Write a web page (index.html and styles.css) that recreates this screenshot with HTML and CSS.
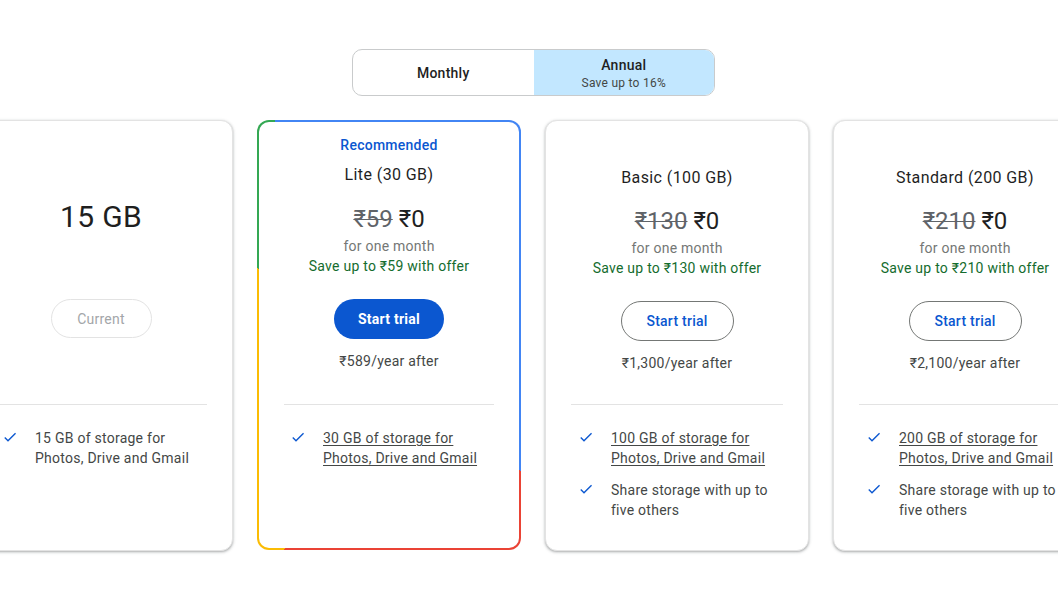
FILE: index.html
```html
<!DOCTYPE html>
<html lang="en">
<head>
<meta charset="utf-8">
<title>Storage plans</title>
<link rel="stylesheet" href="styles.css">
</head>
<body>
<main class="page">
  <div class="toggle">
    <div class="opt">
      <span class="opt-label">Monthly</span>
    </div>
    <div class="opt active">
      <span class="opt-label">Annual</span>
      <span class="opt-sub">Save up to 16%</span>
    </div>
  </div>

  <div class="cards">
    <section class="card">
      <div class="top top-free">
        <div class="big">15 GB</div>
        <button class="btn btn-current">Current</button>
      </div>
      <hr class="divider">
      <ul class="features">
        <li><svg class="check" viewBox="0 0 24 24"><path d="M9 16.17L4.83 12l-1.42 1.41L9 19 21 7l-1.41-1.41z"/></svg><span>15 GB of storage for Photos, Drive and Gmail</span></li>
      </ul>
    </section>

    <section class="card rec">
      <div class="card-inner">
        <div class="top top-rec">
          <div class="rec-label">Recommended</div>
          <div class="title">Lite (30 GB)</div>
          <div class="price"><s class="old">₹59</s> <span class="new">₹0</span></div>
          <div class="period">for one month</div>
          <div class="save">Save up to ₹59 with offer</div>
          <button class="btn btn-filled">Start trial</button>
          <div class="after">₹589/year after</div>
        </div>
        <hr class="divider">
        <ul class="features">
          <li><svg class="check" viewBox="0 0 24 24"><path d="M9 16.17L4.83 12l-1.42 1.41L9 19 21 7l-1.41-1.41z"/></svg><span class="link">30 GB of storage for Photos, Drive and Gmail</span></li>
        </ul>
      </div>
    </section>

    <section class="card">
      <div class="top top-plan">
        <div class="title">Basic (100 GB)</div>
        <div class="price"><s class="old">₹130</s> <span class="new">₹0</span></div>
        <div class="period">for one month</div>
        <div class="save">Save up to ₹130 with offer</div>
        <button class="btn btn-outline">Start trial</button>
        <div class="after">₹1,300/year after</div>
      </div>
      <hr class="divider">
      <ul class="features">
        <li><svg class="check" viewBox="0 0 24 24"><path d="M9 16.17L4.83 12l-1.42 1.41L9 19 21 7l-1.41-1.41z"/></svg><span class="link">100 GB of storage for Photos, Drive and Gmail</span></li>
        <li><svg class="check" viewBox="0 0 24 24"><path d="M9 16.17L4.83 12l-1.42 1.41L9 19 21 7l-1.41-1.41z"/></svg><span>Share storage with up to five others</span></li>
      </ul>
    </section>

    <section class="card">
      <div class="top top-plan">
        <div class="title">Standard (200 GB)</div>
        <div class="price"><s class="old">₹210</s> <span class="new">₹0</span></div>
        <div class="period">for one month</div>
        <div class="save">Save up to ₹210 with offer</div>
        <button class="btn btn-outline">Start trial</button>
        <div class="after">₹2,100/year after</div>
      </div>
      <hr class="divider">
      <ul class="features">
        <li><svg class="check" viewBox="0 0 24 24"><path d="M9 16.17L4.83 12l-1.42 1.41L9 19 21 7l-1.41-1.41z"/></svg><span class="link">200 GB of storage for Photos, Drive and Gmail</span></li>
        <li><svg class="check" viewBox="0 0 24 24"><path d="M9 16.17L4.83 12l-1.42 1.41L9 19 21 7l-1.41-1.41z"/></svg><span>Share storage with up to five others</span></li>
      </ul>
    </section>
  </div>
</main>
</body>
</html>
```

FILE: styles.css
```css
* { box-sizing: border-box; }

html, body {
  margin: 0;
  padding: 0;
  background: #fff;
  overflow: hidden;
}

body {
  font-family: Roboto, "Noto Sans", "DejaVu Sans", sans-serif;
  color: #1f1f1f;
  width: 1058px;
  height: 595px;
  letter-spacing: 0.25px;
}

.page {
  width: 1128px;
  margin-left: -31px;
  padding-top: 49px;
  display: flex;
  flex-direction: column;
  align-items: center;
}

/* toggle */
.toggle {
  width: 363px;
  height: 47px;
  border: 1px solid #c9cbcc;
  border-radius: 10px;
  display: flex;
  overflow: hidden;
  margin-left: 1px;
}

.opt {
  flex: 1;
  display: flex;
  flex-direction: column;
  align-items: center;
  justify-content: center;
  padding-top: 1px;
}

.opt-label {
  font-size: 14px;
  line-height: 20px;
  font-weight: 500;
  color: #1f1f1f;
}

.opt-sub {
  font-size: 12px;
  line-height: 16px;
  color: #444746;
}

.opt.active {
  background: #c2e7ff;
}

/* cards */
.cards {
  display: flex;
  gap: 24px;
  margin-top: 24px;
  align-self: flex-start;
}

.card {
  width: 264px;
  height: 431px;
  flex: none;
  background: #fff;
  border-radius: 12px;
  border: 1px solid #e3e3e3;
  box-shadow: 0 1px 2px rgba(60, 64, 67, 0.3), 0 1px 3px 1px rgba(60, 64, 67, 0.12);
  display: flex;
  flex-direction: column;
}

.card.rec {
  border: none;
  padding: 2px;
  height: 430px;
  box-shadow: none;
  background: conic-gradient(from 0deg,
    #4285f4 0deg 136deg,
    #ea4335 136deg 206deg,
    #fbbc04 206deg 297deg,
    #34a853 297deg 332deg,
    #4285f4 332deg 360deg);
}

.card-inner {
  flex: 1;
  background: #fff;
  border-radius: 10px;
  display: flex;
  flex-direction: column;
}

.top {
  height: 283px;
  display: flex;
  flex-direction: column;
  align-items: center;
  text-align: center;
}

.top-free { padding-top: 76px; }
.top-rec { height: 282px; padding-top: 13px; }
.top-plan { padding-top: 45px; }

.big {
  font-size: 30px;
  line-height: 40px;
  color: #1f1f1f;
  letter-spacing: 0.3px;
}

.rec-label {
  font-size: 14px;
  line-height: 20px;
  font-weight: 500;
  color: #0b57d0;
}

.title {
  font-size: 16px;
  line-height: 24px;
  font-weight: 400;
  color: #1f1f1f;
  letter-spacing: 0.4px;
}

.top-rec .title { margin-top: 8px; }

.price {
  margin-top: 15px;
  margin-bottom: 1px;
  font-size: 24px;
  line-height: 32px;
  letter-spacing: 0;
}

.top-rec .price { margin-top: 16px; }

.price .old {
  color: #5f6368;
  text-decoration-thickness: 1px;
}

.price .new {
  color: #1f1f1f;
}

.period {
  font-size: 14px;
  line-height: 20px;
  color: #747775;
}

.save {
  font-size: 14px;
  line-height: 20px;
  color: #146c2e;
}

.btn {
  font-family: inherit;
  letter-spacing: 0.25px;
  height: 40px;
  border-radius: 20px;
  font-size: 14px;
  padding: 0;
  margin-top: 23px;
  cursor: pointer;
}

.btn-filled {
  background: #0b57d0;
  color: #fff;
  border: none;
  font-weight: 700;
  width: 110px;
}

.btn-outline {
  background: #fff;
  color: #0b57d0;
  border: 1px solid #747775;
  font-weight: 500;
  width: 113px;
}

.btn-current {
  margin-top: 62px;
  height: 39px;
  width: 101px;
  background: #fff;
  border: 1px solid #e3e3e3;
  color: #a3a6a9;
  font-weight: 400;
}

.after {
  margin-top: 12px;
  font-size: 14px;
  line-height: 20px;
  color: #444746;
}

.divider {
  margin: 0 25px;
  border: none;
  border-top: 1px solid #e3e3e3;
  height: 0;
}

.features {
  list-style: none;
  margin: 23px 0 0;
  padding: 0 22px 0 32px;
  display: flex;
  flex-direction: column;
  gap: 12px;
}

.card.rec .features { padding-left: 31px; }

.features li {
  display: flex;
  align-items: flex-start;
  gap: 17px;
  font-size: 14px;
  line-height: 20px;
  color: #444746;
}

.check {
  flex: none;
  width: 16px;
  height: 16px;
  margin-top: 1px;
  fill: #0b57d0;
}

.features .link {
  text-decoration: underline;
  text-underline-offset: 2px;
}
```
